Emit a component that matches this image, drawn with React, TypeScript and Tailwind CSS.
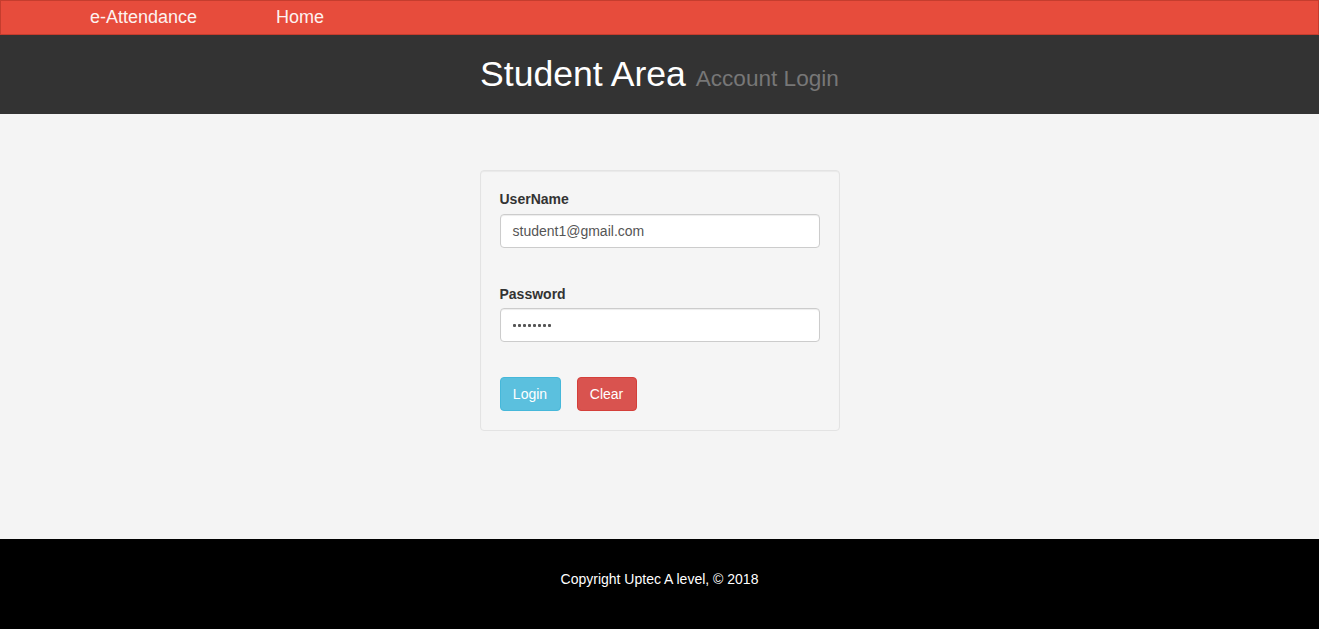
import React from "react";

export default function App() {
  const font = { fontFamily: '"Liberation Sans", Arial, Helvetica, sans-serif' };
  return (
    <div style={font} className="w-[1319px] min-h-[629px] flex flex-col text-[14px] text-[#333]">
      <nav className="h-[35px] bg-[#e74c3c] border border-[#c53d2e] flex items-center pl-[89px] pb-[2px] text-[18px] text-[#fdf2f0]">
        <span className="w-[186px] leading-none">e-Attendance</span>
        <span className="leading-none">Home</span>
      </nav>
      <header className="h-[79px] bg-[#333333] flex items-center justify-center">
        <h1 className="text-[35.6px] leading-[1.1] text-white">
          Student Area <span className="text-[22.6px] text-[#777777]">Account Login</span>
        </h1>
      </header>
      <main className="h-[425px] bg-[#f4f4f4] pt-[56px]">
        <div className="mx-auto w-[360px] h-[261px] bg-[#f5f5f5] border border-[#e3e3e3] rounded-[4px] px-[19px] pt-[18px] shadow-[inset_0_1px_1px_rgba(0,0,0,0.05)]">
          <label className="block font-bold leading-[20px] mb-[5px]">UserName</label>
          <div className="h-[34px] bg-white border border-[#ccc] rounded-[4px] px-[12px] flex items-center text-[#555] shadow-[inset_0_1px_1px_rgba(0,0,0,0.075)]">
            student1@gmail.com
          </div>
          <label className="block font-bold leading-[20px] mb-[4px] mt-[36px]">Password</label>
          <div className="h-[34px] bg-white border border-[#ccc] rounded-[4px] px-[12px] flex items-center gap-[2px] shadow-[inset_0_1px_1px_rgba(0,0,0,0.075)]">
            {Array.from({ length: 8 }).map((_, i) => (
              <span key={i} className="w-[3px] h-[3px] bg-[#555] rounded-[1px]" />
            ))}
          </div>
          <div className="flex gap-[16px] mt-[35px]">
            <button className="h-[34px] w-[61px] bg-[#5bc0de] border border-[#46b8da] rounded-[4px] text-white leading-[20px]">
              Login
            </button>
            <button className="h-[34px] w-[60px] bg-[#d9534f] border border-[#d43f3a] rounded-[4px] text-white leading-[20px]">
              Clear
            </button>
          </div>
        </div>
      </main>
      <footer className="h-[90px] bg-black flex items-center justify-center pb-[10px] text-white text-[14px]">
        Copyright Uptec A level, © 2018
      </footer>
    </div>
  );
}
